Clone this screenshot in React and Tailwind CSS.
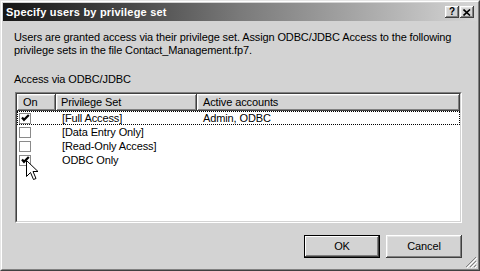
import { useState } from 'react'

const raised =
  'shadow-[inset_-1px_-1px_#404040,inset_1px_1px_#ffffff,inset_-2px_-2px_#808080,inset_2px_2px_#e4e4e4]'

const rows = [
  { on: true, name: '[Full Access]', accounts: 'Admin, ODBC' },
  { on: false, name: '[Data Entry Only]', accounts: '' },
  { on: false, name: '[Read-Only Access]', accounts: '' },
  { on: true, name: 'ODBC Only', accounts: '' }
]

const CheckBox = ({ checked }) => (
  <div className="w-[12px] h-[11px] border border-[#8a8a8a] bg-white flex items-center justify-center">
    {checked && (
      <svg width="9" height="8" viewBox="0 0 9 8">
        <path d="M1 3.5 L3 5.8 L7.8 1" stroke="#000" strokeWidth="2.2" fill="none" />
      </svg>
    )}
  </div>
)

const App = () => {
  const [list] = useState(rows)

  return (
    <div
      className="w-[480px] h-[271px] bg-[#d3d3d3] border border-t-[#e6e6e6] border-l-[#e6e6e6] border-r-[#404040] border-b-[#404040] text-black text-[11px] tracking-[-0.12px]"
      style={{ fontFamily: '"Liberation Sans", Arial, sans-serif' }}
    >
      <div className="h-full border border-t-white border-l-white border-r-[#808080] border-b-[#808080] p-px flex flex-col relative">

        <div className="h-[18px] bg-linear-to-r from-[#161616] via-[#7a7a7a] to-[#d6d6d6] flex items-center justify-between pl-[3px] pr-[3px]">
          <span className="text-white font-bold text-[11px] tracking-[0.2px] leading-none">
            Specify users by privilege set
          </span>
          <div className="flex">
            <div className={`w-[14px] h-[12px] bg-[#d3d3d3] ${raised} flex items-center justify-center text-[10px] font-bold leading-none`}>
              ?
            </div>
            <div className={`ml-[1px] w-[14px] h-[12px] bg-[#d3d3d3] ${raised} flex items-center justify-center`}>
              <svg width="8" height="7" viewBox="0 0 8 7">
                <path d="M0.5 0.5 L7 6.5 M7 0.5 L0.5 6.5" stroke="#000" strokeWidth="1.6" />
              </svg>
            </div>
          </div>
        </div>

        <div className="flex flex-col pl-[11px] pr-[14px]">
          <p className="mt-[10px] leading-[13px]">
            Users are granted access via their privilege set. Assign ODBC/JDBC Access to the following
            privilege sets in the file Contact_Management.fp7.
          </p>

          <p className="mt-[16px] leading-[13px]">Access via ODBC/JDBC</p>

          <div className="mt-[6px] ml-px w-[447px] h-[131px] border border-t-[#808080] border-l-[#808080] border-r-white border-b-white">
            <div className="h-full border border-t-[#404040] border-l-[#404040] border-r-[#d3d3d3] border-b-[#d3d3d3] bg-white flex flex-col">

              <div className="flex h-[17px] shrink-0">
                <div className={`w-[39px] bg-[#d3d3d3] ${raised} pl-[6px] flex items-center`}>On</div>
                <div className={`w-[141px] bg-[#d3d3d3] ${raised} pl-[5px] flex items-center`}>Privilege Set</div>
                <div className={`flex-1 bg-[#d3d3d3] ${raised} pl-[6px] flex items-center`}>Active accounts</div>
              </div>

              {list.map((row, i) => (
                <div
                  key={row.name}
                  className={`flex h-[14px] items-center border border-dotted ${i === 0 ? 'border-black' : 'border-transparent'}`}
                >
                  <div className="w-[38px] pl-[1px] flex items-center">
                    <CheckBox checked={row.on} />
                  </div>
                  <div className="w-[141px] pl-[6px] leading-none">{row.name}</div>
                  <div className="flex-1 pl-[6px] leading-none">{row.accounts}</div>
                </div>
              ))}

            </div>
          </div>

          <div className="mt-[12px] flex justify-end gap-[6px] pr-px">
            <button className="w-[76px] h-[23px] bg-[#d3d3d3] border border-black shadow-[inset_-1px_-1px_#404040,inset_1px_1px_#ffffff,inset_-2px_-2px_#808080]">
              OK
            </button>
            <button className={`w-[76px] h-[23px] bg-[#d3d3d3] ${raised}`}>
              Cancel
            </button>
          </div>
        </div>

        <svg className="absolute right-[1px] bottom-[1px]" width="12" height="12" viewBox="0 0 12 12">
          <path d="M11 1 L1 11 M11 5 L5 11 M11 9 L9 11" stroke="#808080" strokeWidth="1" />
          <path d="M12 2 L2 12 M12 6 L6 12 M12 10 L10 12" stroke="#ffffff" strokeWidth="1" />
        </svg>

        <svg className="absolute left-[24px] top-[158px]" width="13" height="21" viewBox="0 0 13 21">
          <path
            d="M0.5 0.5 L0.5 16.5 L4.5 12.5 L7.5 19.5 L10 18.5 L7 11.5 L12 11.5 Z"
            fill="#fff"
            stroke="#000"
            strokeWidth="1"
          />
        </svg>
      </div>
    </div>
  )
}

export default App
